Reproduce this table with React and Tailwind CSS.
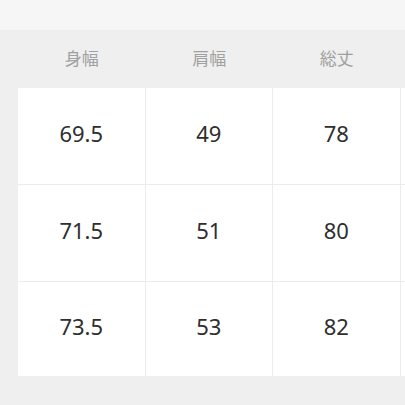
import React from 'react';

const headers = ['身幅', '肩幅', '総丈'];
const rows = [
  ['69.5', '49', '78'],
  ['71.5', '51', '80'],
  ['73.5', '53', '82'],
];

const App = () => {
  return (
    <div
      className="w-[405px] h-[405px] overflow-hidden bg-[#efefef]"
      style={{ fontFamily: '"Noto Sans", "Noto Sans CJK JP", sans-serif' }}
    >
      {/* top strip */}
      <div className="h-[30px] bg-[#f6f6f6]" />

      {/* header */}
      <div className="flex h-[58px] pl-[18px] items-center">
        {headers.map((h) => (
          <div key={h} className="w-[127.5px] shrink-0 text-center text-[17px] text-[#a0a0a0] pb-[1px]">
            {h}
          </div>
        ))}
      </div>

      {/* body: 4th column is cut off by the viewport */}
      <div className="ml-[18px] bg-white w-[520px]">
        {rows.map((row, i) => (
          <div key={i} className={`flex ${i < rows.length - 1 ? 'h-[97px] border-b border-[#ececec]' : 'h-[94px]'}`}>
            {row.map((v, j) => (
              <div
                key={j}
                className="w-[127.5px] shrink-0 flex items-center justify-center border-r border-[#ececec] text-[22px] text-[#2e2e2e] pb-[6px]"
              >
                {v}
              </div>
            ))}
            <div className="w-[127.5px] shrink-0" />
          </div>
        ))}
      </div>
    </div>
  );
};

export default App;
